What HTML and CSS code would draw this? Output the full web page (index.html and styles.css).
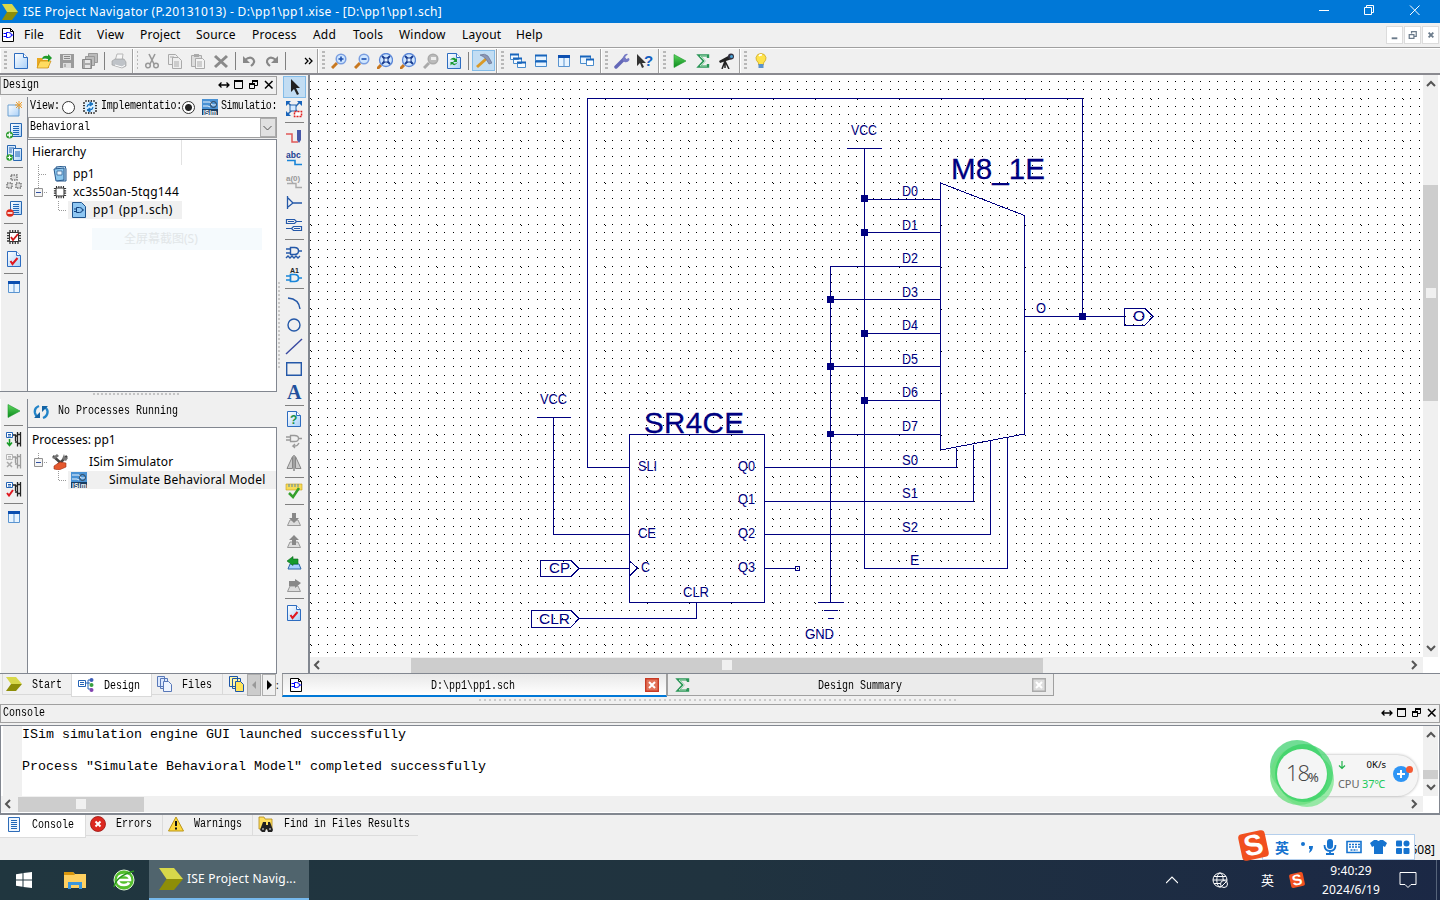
FILE: index.html
```html
<!DOCTYPE html>
<html lang="en">
<head>
<meta charset="utf-8">
<title>ISE Project Navigator</title>
<link rel="stylesheet" href="styles.css">
</head>
<body>
<svg class="defs" aria-hidden="true">
  <defs>
    <linearGradient id="gPage" x1="0" y1="0" x2="1" y2="1"><stop offset="0" stop-color="#fff"/><stop offset="1" stop-color="#a9d0f8"/></linearGradient>
    <linearGradient id="gPlay" x1="0" y1="0" x2="0" y2="1"><stop offset="0" stop-color="#5fd75f"/><stop offset="1" stop-color="#0a8a1c"/></linearGradient>
    <symbol id="xilinx" viewBox="0 0 16 16" preserveAspectRatio="none"><path d="M0 0h10l6 8H5z" fill="#d8d84a"/><path d="M5 8h11l-6 8H0z" fill="#8e8e08"/></symbol>
    <symbol id="sch" viewBox="0 0 14 16"><path d="M1.500 1.500h8l3 3v10h-11z" fill="#fff" stroke="#000"/><path d="M9.500 1.500v3h3" fill="none" stroke="#000"/><path d="M5.500 5.500h2q3 0 3 2.500t-3 2.500h-2zM2.500 6.500h3M2.500 9.500h3M10.500 8h2" fill="none" stroke="#00f"/></symbol>
    <symbol id="page" viewBox="0 0 16 16"><path d="M1.500 .5h9l4 4v11h-13z" fill="url(#gPage)" stroke="#2d6cc0"/><path d="M10.500 .5v4h4" fill="#fff" stroke="#2d6cc0"/></symbol>
    <symbol id="zoomer" viewBox="0 0 16 16"><path d="M1 15l5-5" stroke="#c87820" stroke-width="3"/><circle cx="10" cy="6" r="4.800" fill="#cfe6ff" stroke="#7a9ee0" stroke-width="1.500"/></symbol>
    <symbol id="zoomfit" viewBox="0 0 16 16"><path d="M0 16l4-4" stroke="#c87820" stroke-width="3"/><circle cx="9" cy="7" r="6.500" fill="#cfe6ff" stroke="#5a86d8" stroke-width="1.300"/><path d="M5 3l8 8M13 3l-8 8" stroke="#163a90" stroke-width="1.800"/><path d="M7 5h4v4H7z" fill="#e8f4ff" stroke="#163a90"/></symbol>
    <symbol id="play" viewBox="0 0 16 16"><path d="M2 1.500l12 6.500-12 6.500z" fill="url(#gPlay)" stroke="#1b9a2c" stroke-width=".6"/></symbol>
    <symbol id="table" viewBox="0 0 16 16"><path d="M2.500 2.500h11v11h-11z" fill="#e8f4ff" stroke="#5a94d0"/><path d="M2 2h12v3H2z" fill="#0c4fb0"/><path d="M8 5v9" stroke="#5a94d0"/></symbol>
    <symbol id="chip" viewBox="0 0 16 16"><path d="M4 1v14M6.700 1v14M9.300 1v14M12 1v14M1 4h14M1 6.700h14M1 9.300h14M1 12h14" stroke="#333" stroke-width="1.300"/><path d="M3.500 3.500h9v9h-9z" fill="#fff" stroke="#333"/></symbol>
    <symbol id="lines" viewBox="0 0 16 16"><path d="M4.500 .5h11v13h-11z" fill="url(#gPage)" stroke="#2867b0"/><path d="M7 3.500h6M7 5.500h6M7 7.500h6M7 9.500h6M7 11.500h6" stroke="#1d66b8"/></symbol>
    <symbol id="isim" viewBox="0 0 16 16"><path d="M0 0h16v16H0z" fill="#4a92d4"/><path d="M1 3h7l2 3h4M1 7h5l2 1" stroke="#e8f4ff" fill="none"/><circle cx="11.500" cy="5.500" r="3" fill="none" stroke="#345"/><path d="M0 10h16v6H0z" fill="#173d62"/><text x="1" y="15.500" class="isimtext">ISim</text></symbol>
    <symbol id="flow" viewBox="0 0 16 16"><path d="M.5 1.500h6v5h-6z" fill="#fff" stroke="#2463b5"/><path d="M2 3.500h3M2 5h3" stroke="#2463b5"/><path d="M7 4h2.500v6M11.500 3.500h3v9h-3zM9 5h2M9 11h2M14.500 1v2.500M11.500 1v2.500M14.500 12v3.500M11.500 12v3.500" fill="none" stroke="#222" stroke-width="1.300"/></symbol>
    <symbol id="pagecheck" viewBox="0 0 16 16"><use href="#page"/><path d="M4.500 10l2 3 5-6" fill="none" stroke="#e01820" stroke-width="2"/></symbol>
    <symbol id="dockdouble" viewBox="0 0 12 12"><path d="M1 6h10M3.500 3.500L1 6l2.500 2.500M8.500 3.500L11 6 8.500 8.500" fill="none" stroke="#000" stroke-width="1.300"/></symbol>
    <symbol id="dockmax" viewBox="0 0 12 12"><path d="M1.500 1.500h8v8h-8z" fill="none" stroke="#000"/><path d="M1 2h9" stroke="#000" stroke-width="2"/></symbol>
    <symbol id="dockfloat" viewBox="0 0 12 12"><path d="M4.500 4V1.500h5v5H7M1.500 5h5v4.500h-5z" fill="none" stroke="#000"/><path d="M4 2h6M1 5h6" stroke="#000" stroke-width="2"/></symbol>
    <symbol id="dockx" viewBox="0 0 12 12"><path d="M2 2l7.500 7.500M9.500 2L2 9.500" stroke="#000" stroke-width="1.500"/></symbol>
    <symbol id="aup" viewBox="0 0 12 12"><path d="M2 8l4-4 4 4" fill="none" stroke="#555" stroke-width="2"/></symbol>
    <symbol id="adown" viewBox="0 0 12 12"><path d="M2 4l4 4 4-4" fill="none" stroke="#555" stroke-width="2"/></symbol>
    <symbol id="aleft" viewBox="0 0 12 12"><path d="M8 2L4 6l4 4" fill="none" stroke="#555" stroke-width="2"/></symbol>
    <symbol id="aright" viewBox="0 0 12 12"><path d="M4 2l4 4-4 4" fill="none" stroke="#555" stroke-width="2"/></symbol>
    <symbol id="minus" viewBox="0 0 9 9"><path d="M.5 .5h8v8h-8z" fill="#f4f4f4" stroke="#919191"/><path d="M2 4.500h5" stroke="#3050a0"/></symbol>
    <symbol id="drum" viewBox="0 0 16 16"><path d="M4 9h8l2.500 5.500h-13z" fill="#ddd" stroke="#999"/></symbol>
  </defs>
</svg>

<header class="titlebar">
  <svg class="i16"><use href="#xilinx"/></svg>
  <span class="title">ISE Project Navigator (P.20131013) - D:\pp1\pp1.xise - [D:\pp1\pp1.sch]</span>
  <svg class="winbtns" viewBox="0 0 140 23"><path d="M19 10.500h10M64.500 7.500h7v7h-7zM66.500 7.500v-2h7v7h-2M110 5.500l9.500 9.500M119.500 5.500L110 15" fill="none" stroke="#fff"/></svg>
</header>

<nav class="menubar">
  <svg class="menuicon"><use href="#sch"/></svg>
  <span class="m1">File</span><span class="m2">Edit</span><span class="m3">View</span><span class="m4">Project</span><span class="m5">Source</span><span class="m6">Process</span><span class="m7">Add</span><span class="m8">Tools</span><span class="m9">Window</span><span class="m10">Layout</span><span class="m11">Help</span>
  <div class="mdibtns">
    <svg viewBox="0 0 16 17"><path d="M5 12h6" stroke="#6b7b8b" stroke-width="2"/></svg>
    <svg viewBox="0 0 16 17"><path d="M7 7V5h5v5h-2M4.500 8h5v4h-5z" fill="none" stroke="#6b7b8b" stroke-width="1.300"/></svg>
    <svg viewBox="0 0 16 17"><path d="M6 6l5 5M11 6l-5 5" stroke="#6b7b8b" stroke-width="2"/></svg>
  </div>
</nav>

<div class="toolbar">
  <div class="group ga"><i class="grip"></i>
    <svg><use href="#page"/></svg>
    <svg viewBox="0 0 16 16"><path d="M1 15V5h5l1 2h6v8z" fill="#e9a820"/><path d="M1 15l3-7h11l-3 7z" fill="#ffdc60" stroke="#c98a10" stroke-width=".7"/><path d="M6 6q1-4 6-3V1l4 4-4 4V6q-3-1-6 0" fill="#1e9a2a"/></svg>
    <svg viewBox="0 0 16 16"><path d="M1 1h14v14H1z" fill="#9b9b9b"/><path d="M4 2h8v5H4zM4 10h8v5H4z" fill="#ddd"/><path d="M5 3.500h6M5 5.500h6M6 11v3" stroke="#888"/></svg>
    <svg viewBox="0 0 16 16"><path d="M6.500 .5h9v9h-9z" fill="#bbb" stroke="#999"/><path d="M3.500 3.500h9v9h-9z" fill="#bbb" stroke="#999"/><path d="M.5 6.500h9v9h-9z" fill="#aaa" stroke="#888"/><path d="M3 7h5v3H3zM3 12h5v3H3z" fill="#e6e6e6"/></svg>
    <i class="sep"></i>
    <svg viewBox="0 0 16 16"><path d="M4 8l2-7h6l-1 7z" fill="#f6f6f6" stroke="#b8b8b8"/><path d="M1 8l3-2h9l2 3v4l-4 2-10-3z" fill="#bfc3c8" stroke="#999" stroke-width=".6"/><path d="M4 12l7 2 3-2" stroke="#fff" fill="none"/></svg>
  </div>
  <div class="group gb"><i class="grip"></i>
    <svg viewBox="0 0 16 16"><path d="M5 1l5 10M11 1L6 11" stroke="#999" stroke-width="1.600"/><circle cx="4" cy="12.500" r="2.300" fill="none" stroke="#999" stroke-width="1.500"/><circle cx="12" cy="12.500" r="2.300" fill="none" stroke="#999" stroke-width="1.500"/></svg>
    <svg viewBox="0 0 16 16"><path d="M1.500 1.500h7l2 2v8h-9z" fill="#eee" stroke="#aaa"/><path d="M5.500 4.500h6l3 3v8h-9z" fill="#eee" stroke="#aaa"/><path d="M7 9h5M7 11h5M7 13h5M3 4h4" stroke="#aaa"/></svg>
    <svg viewBox="0 0 16 16"><path d="M1.500 2.500h10v11h-10z" fill="#ddd" stroke="#aaa"/><path d="M4 1h5v3H4z" fill="#aaa"/><path d="M5.500 5.500h7l2 2v8h-9z" fill="#f3f3f3" stroke="#aaa"/><path d="M7 9h5M7 11h5M7 13h5" stroke="#aaa"/></svg>
    <svg viewBox="0 0 16 16"><path d="M2 3l12 11M14 3L2 14" stroke="#8a8a8a" stroke-width="3"/></svg>
    <i class="sep"></i>
    <svg viewBox="0 0 16 16"><path d="M4 7q5-4 8-1t-2 7" fill="none" stroke="#888" stroke-width="2.200"/><path d="M2 3v7h7z" fill="#888"/></svg>
    <svg viewBox="0 0 16 16"><path d="M12 7Q7 3 4 6t2 7" fill="none" stroke="#888" stroke-width="2.200"/><path d="M14 3v7H7z" fill="#888"/></svg>
    <i class="sep"></i>
    <svg class="more" viewBox="0 0 16 16"><path d="M4 5l3 3-3 3M8 5l3 3-3 3" fill="none" stroke="#000" stroke-width="1.300"/></svg>
  </div>
  <div class="group gc"><i class="grip"></i>
    <svg viewBox="0 0 16 16"><use href="#zoomer"/><path d="M7.500 6h5M10 3.500v5" stroke="#1b4fb0" stroke-width="1.600"/></svg>
    <svg viewBox="0 0 16 16"><use href="#zoomer"/><path d="M7.500 6h5" stroke="#1b4fb0" stroke-width="1.600"/></svg>
    <svg><use href="#zoomfit"/></svg>
    <svg><use href="#zoomfit"/></svg>
    <svg viewBox="0 0 16 16"><path d="M1 15l5-5" stroke="#aaa" stroke-width="3"/><circle cx="10" cy="6" r="4.800" fill="#bbb" stroke="#aaa" stroke-width="1.500"/><path d="M8 4h5v3H8z" fill="#eee"/></svg>
    <svg viewBox="0 0 16 16"><use href="#page"/><path d="M4 7q3-4 6-1l1-1v4H7l1.500-1.500Q6.500 6 4 7M12 9q-3 5-6 2l-1.500 1.500V9H8l-1 1q2 2 5-1" fill="#189a30"/></svg>
    <i class="sep"></i>
    <span class="pressed"><svg viewBox="0 0 16 16"><path d="M1 14l9-8" stroke="#d99a28" stroke-width="3"/><path d="M4 2q5-2 8 1l4 7-3 1-3-5Q7 3 4 2" fill="#8c96b4" stroke="#5e6888" stroke-width=".6"/></svg></span>
  </div>
  <div class="group gd"><i class="grip"></i>
    <svg viewBox="0 0 16 16"><path d="M.5 1.500h8v5h-8zM3.500 5.500h8v5h-8zM7.500 9.500h8v5h-8z" fill="#f5faff" stroke="#4a8ccc"/><path d="M0 1.500h9M3 5.500h9M7 9.500h9" stroke="#1764bc" stroke-width="2"/></svg>
    <svg viewBox="0 0 16 16"><path d="M2.500 2.500h11v5h-11zM2.500 8.500h11v5h-11z" fill="#e8f4ff" stroke="#4a8ccc"/><path d="M2 2.500h12M2 8.500h12" stroke="#1764bc" stroke-width="2"/></svg>
    <svg><use href="#table"/></svg>
    <svg viewBox="0 0 16 16"><path d="M1.500 3.500h10v7h-10z" fill="#eaf5ff" stroke="#4a8ccc"/><path d="M7.500 6.500h7v6h-7z" fill="#fff" stroke="#4a8ccc"/><path d="M1 3.500h11M7 6.500h8" stroke="#1764bc" stroke-width="2"/></svg>
  </div>
  <div class="group ge"><i class="grip"></i>
    <svg viewBox="0 0 16 16"><path d="M2 14l8-8" stroke="#6468b8" stroke-width="3.500" stroke-linecap="round"/><path d="M14 1l-3 3 1 2 3-1 .5 2q-2 3-5 2T9 4q2-4 5-3" fill="#7478c4"/></svg>
    <svg viewBox="0 0 16 16"><path d="M0 1v12l3-3 2 5 2-1-2-4h4z" fill="#333"/><text x="7" y="13" class="qmark">?</text></svg>
  </div>
  <div class="group gf"><i class="grip"></i>
    <svg><use href="#play"/></svg>
    <svg viewBox="0 0 16 16"><path d="M13 5V2.500H4L9 8l-5 5.500h9V11" fill="none" stroke="#2b9658" stroke-width="2.400"/><path d="M12 3H5l5 5-5 5h7" fill="none" stroke="#bde8c8" stroke-width=".9"/></svg>
    <svg viewBox="0 0 16 16"><path d="M1 8l11-6 2 4-12 4z" fill="#222"/><circle cx="13" cy="3.500" r="3" fill="#334"/><circle cx="13.500" cy="3.500" r="1.500" fill="#4ba5d8"/><path d="M7 8l-3 8M7 8l4 8M7 8v7" stroke="#222" stroke-width="1.500"/></svg>
  </div>
  <div class="group gg"><i class="grip"></i>
    <svg viewBox="0 0 16 16"><path d="M5.500 10Q2.500 7 3 4.500 4 .5 8 .5t5 4Q13.500 7 10.500 10v2h-5z" fill="#ffe34a" stroke="#c9a21c" stroke-width=".7"/><path d="M6 3q1-1.500 3-1" stroke="#fff" stroke-width="1.500" fill="none"/><path d="M5.500 11h5v4h-5z" fill="#5c92cc"/></svg>
  </div>
</div>

<main class="workspace">
  <aside class="dock">
    <div class="dockhead"><span class="sim">Design</span><span class="dockicons"><svg><use href="#dockdouble"/></svg><svg><use href="#dockmax"/></svg><svg><use href="#dockfloat"/></svg><svg><use href="#dockx"/></svg></span></div>
    <section class="upper">
      <div class="strip">
        <svg viewBox="0 0 16 16"><path d="M2 4h11v11H2z" fill="url(#gPage)" stroke="#6a9fd0"/><path d="M13 0v8M9 4h7M10 1l6 6M16 1l-6 6" stroke="#eda030"/></svg>
        <svg viewBox="0 0 16 16"><use href="#lines"/><circle cx="3.500" cy="12" r="3.500" fill="#2c9c2e"/><path d="M1 12h5M3.500 9.500v5" stroke="#fff" stroke-width="1.400"/></svg>
        <svg viewBox="0 0 16 16"><path d="M1.500 .5h8v10h-8z" fill="#d8ebff" stroke="#2867b0"/><path d="M3 3h5M3 5h3M3 7h3" stroke="#2867b0"/><path d="M7.500 3.500h8v12h-8z" fill="url(#gPage)" stroke="#2867b0"/><path d="M9 7h5M9 9h5M9 11h5" stroke="#1d66b8"/><circle cx="3.500" cy="12.500" r="3.200" fill="#2c9c2e"/><path d="M1.500 12.500h4M3.500 10.500v4" stroke="#fff" stroke-width="1.200"/></svg>
        <i class="hsep"></i>
        <svg viewBox="0 0 16 16"><path d="M5 2h6v5H5zM1 10h5v5H1zM10 10h5v5h-5z" fill="#ddd" stroke="#777" stroke-width="1.500" stroke-dasharray="1.500 1"/></svg>
        <i class="hsep"></i>
        <svg viewBox="0 0 16 16"><use href="#lines"/><circle cx="4" cy="12" r="3.800" fill="#dc2a1c"/><path d="M1.500 12h5" stroke="#fff" stroke-width="1.600"/></svg>
        <i class="hsep"></i>
        <svg viewBox="0 0 16 16"><use href="#chip"/><path d="M5 8l2 3 5-6" stroke="#d01818" stroke-width="1.800" fill="none"/></svg>
        <svg><use href="#pagecheck"/></svg>
        <i class="hsep"></i>
        <svg><use href="#table"/></svg>
      </div>
      <div class="panel">
        <div class="viewrow"><span class="sim">View:</span><i class="radio r1"></i><svg class="i16" viewBox="0 0 16 16"><use href="#chip"/><path d="M3 3h10v10H3z" fill="#d8efff"/><path d="M5 8q0-3 3-3M11 8q0 3-3 3M8 3v4l3-2zM8 9v4l-3-2z" stroke="#1972c0" fill="#1972c0"/></svg><span class="sim impl">Implementatio:</span><i class="radio on"></i><svg class="i16 simic"><use href="#isim"/></svg><span class="sim simu">Simulatio:</span></div>
        <div class="combo"><span class="sim">Behavioral</span><span class="combobtn"><svg viewBox="0 0 12 12"><path d="M2 4l4 4 4-4" fill="none" stroke="#555"/></svg></span></div>
        <div class="tree">
          <div class="treehead"><span>Hierarchy</span></div>
          <div class="row"><svg class="br" viewBox="0 0 30 18"><path d="M10.500 0v18M11 9.500h8" class="dots"/></svg><svg class="i16" viewBox="0 0 16 16"><path d="M4 1l9-1 1 3v12H5z" fill="#b8dcf4" stroke="#28588c"/><path d="M2 3l10-1v12l-8 1z" fill="#8cc8ee" stroke="#28588c"/><path d="M5 5h5v4H5z" fill="#e8f6ff" stroke="#28588c" stroke-width=".7"/></svg><span>pp1</span></div>
          <div class="row"><svg class="br" viewBox="0 0 30 18"><path d="M10.500 0v5M16 9.500h4" class="dots"/><use href="#minus" x="6" y="5" width="9" height="9"/></svg><svg class="i14"><use href="#chip"/></svg><span class="dev">xc3s50an-5tqg144</span></div>
          <div class="row"><svg class="br" viewBox="0 0 30 18"></svg><svg class="br2" viewBox="0 0 12 18"><path d="M1.500 0v9.500h8" class="dots"/></svg><span class="selected s1"><svg class="i16" viewBox="0 0 16 16"><path d="M1.500 .5h9l4 4v11h-13z" fill="#8fc7f2" stroke="#20548c"/><path d="M5.500 5.500h3q3 0 3 2.500t-3 2.500h-3zM3 7h2.500M3 9.500h2.500M11.500 8H13" fill="none" stroke="#12407c"/></svg><span>pp1 (pp1.sch)</span></span></div>
          <div class="ghost">全屏幕截图(S)</div>
        </div>
      </div>
    </section>
    <div class="vsplit"><i></i></div>
    <section class="lower">
      <div class="strip strip2">
        <svg><use href="#play"/></svg>
        <i class="hsep"></i>
        <svg viewBox="0 0 16 16"><use href="#flow"/><path d="M3.500 8v6M1 11.500l2.500 3 2.500-3" stroke="#159a25" stroke-width="1.500" fill="none"/></svg>
        <svg class="dim" viewBox="0 0 16 16"><use href="#flow"/><path d="M1 9l5 5M6 9l-5 5" stroke="#444" stroke-width="1.500"/></svg>
        <i class="hsep"></i>
        <svg viewBox="0 0 16 16"><use href="#flow"/><path d="M1 12l2 2.500L7 9" stroke="#e01820" stroke-width="2" fill="none"/></svg>
        <i class="hsep"></i>
        <svg><use href="#table"/></svg>
      </div>
      <div class="panel">
        <div class="running"><svg class="i16" viewBox="0 0 16 16"><path d="M6 2Q1 4 2 9q.5 2 2 4M10 14q5-2 4.500-7Q14 5 12 3" fill="none" stroke="#2384c8" stroke-width="2.400"/><path d="M1 14h6V8zM15 2H9v6z" fill="#1463a4"/></svg><span class="sim">No Processes Running</span></div>
        <div class="tree proc">
          <div class="treehead"><span>Processes: pp1</span></div>
          <div class="row"><svg class="br" viewBox="0 0 30 18"><path d="M10.500 0v5M16 9.500h4" class="dots"/><use href="#minus" x="6" y="5" width="9" height="9"/></svg><svg class="i16" viewBox="0 0 16 16"><path d="M1 2l10 9M15 2L6 11" stroke="#444" stroke-width="2.500"/><path d="M0 4l5-4 2 2-4 3zM12 0l1 3 3 1-2 3-4-2z" fill="#777"/><path d="M2 12l6-4 6 1v4l-7 3-5-1z" fill="#e4582e" stroke="#9c2c12" stroke-width=".6"/></svg><span class="ptext">ISim Simulator</span></div>
          <div class="row"><svg class="br" viewBox="0 0 30 18"></svg><svg class="br2" viewBox="0 0 12 18"><path d="M1.500 0v9.500h8" class="dots"/></svg><span class="selected s2"><svg class="i16"><use href="#isim"/></svg><span class="ptext2">Simulate Behavioral Model</span></span></div>
        </div>
      </div>
    </section>
    <div class="docktabs">
      <span class="dt t1"><svg class="i16"><use href="#xilinx" height="14" y="1"/></svg><span class="sim">Start</span></span>
      <span class="dt t2"><svg class="i16" viewBox="0 0 16 16"><path d="M.5 3.500h7v6h-7z" fill="#fff" stroke="#2463b5"/><path d="M2 5.500h4M2 7.500h4M8 6h4M10 3v9h3M10 3h3" stroke="#2463b5" fill="none"/><circle cx="13.500" cy="3" r="2" fill="#3d5db8"/><circle cx="13.500" cy="8" r="2" fill="#38a040"/><circle cx="13.500" cy="13" r="2" fill="#8244b0"/></svg><span class="sim">Design</span></span>
      <span class="dt t3"><svg class="i16" viewBox="0 0 16 16"><path d="M1.500 .5h7v10h-7zM4.500 2.500h7v10h-7z" fill="#dce9ff" stroke="#5878b8"/><path d="M7.500 5.500h5l3 3v7h-8z" fill="#eef4ff" stroke="#5878b8"/></svg><span class="sim">Files</span></span>
      <span class="dt t4"><svg class="i16" viewBox="0 0 16 16"><path d="M1.500 .5h8v10h-8zM4.500 2.500h8v10h-8z" fill="#fff6a8" stroke="#1d56a8"/><path d="M7.500 5.500h5l3 3v7h-8z" fill="#ffe45a" stroke="#1d56a8"/></svg></span>
      <span class="scr off"><svg viewBox="0 0 12 12"><path d="M8 2v8L4 6z" fill="#999"/></svg></span><span class="scr"><svg viewBox="0 0 12 12"><path d="M4 1v10l5-5z" fill="#000"/></svg></span><span class="rest">:</span>
    </div>
  </aside>
  <div class="hsplit"></div>
  <div class="editor">
    <div class="edrow">
      <div class="tools">
        <span class="pressed"><svg viewBox="0 0 16 16"><path d="M5 0v13l3-3 3 6 2-1-3-6h4z" fill="#222"/></svg></span>
        <svg viewBox="0 0 16 16"><path d="M1 1l13 12M14 1L1 14" stroke="#2464ac" stroke-width="1.500"/><path d="M0 0h5L0 5zM16 0v5l-5-5zM0 15v-5l5 5z" fill="#1764bc"/><path d="M4 4h6v6H4z" fill="#d6ebff" stroke="#2464ac"/><path d="M8.500 10.500h7v5h-7z" fill="#fff" stroke="#e02020" stroke-width="1.500" stroke-dasharray="2 1"/></svg>
        <i class="hsep"></i>
        <svg viewBox="0 0 16 16"><path d="M0 5h6v8h6" fill="none" stroke="#e05858" stroke-width="1.500"/><path d="M11 1h4v10l-2 3-2-3z" fill="#4858a8"/></svg>
        <svg viewBox="0 0 16 16"><text x="0" y="7" class="ictext">abc</text><path d="M1 9.500h8v4h7" fill="none" stroke="#1985d8" stroke-width="1.600"/></svg>
        <svg viewBox="0 0 16 16"><text x="0" y="8" class="ictext g">a(0)</text><path d="M1 10.500h9v4h6" fill="none" stroke="#aaa" stroke-width="1.400"/></svg>
        <svg viewBox="0 0 16 16"><path d="M1.500 1v13M2 3l5 5-5 4M7 8h9" fill="none" stroke="#2458a8" stroke-width="1.300"/></svg>
        <svg viewBox="0 0 16 16"><path d="M.5 2.500h8l2 2-2 2h-8zM15.500 9.500h-8l-2 2 2 2h8zM10 4.500h6M0 11.500h6M2 4.500h6M8 11.500h6" fill="none" stroke="#2458a8" stroke-width="1.200"/></svg>
        <i class="hsep"></i>
        <svg viewBox="0 0 16 16"><path d="M4.500 2.500h4q4 0 4 3.500t-4 3.500h-4zM0 4h4M0 8h4M12 6h4M0 13l2-2 2 2 2-2 2 2 2-2 2 2 2-2" fill="none" stroke="#2458a8" stroke-width="1.400"/></svg>
        <svg viewBox="0 0 16 16"><text x="4" y="6" class="ictext k">A1</text><path d="M4.500 7.500h4q4 0 4 3.500t-4 3.500h-4zM0 9h4M0 13h4M12 11h4" fill="none" stroke="#1985d8" stroke-width="1.700"/></svg>
        <i class="hsep"></i>
        <svg viewBox="0 0 16 16"><path d="M2 3q11 1 12 11" fill="none" stroke="#2458a8" stroke-width="1.400"/></svg>
        <svg viewBox="0 0 16 16"><circle cx="8" cy="8" r="6" fill="none" stroke="#2458a8" stroke-width="1.400"/></svg>
        <svg viewBox="0 0 16 16"><path d="M0 15L16 0" stroke="#3848a0" stroke-width="1.400"/></svg>
        <svg viewBox="0 0 16 16"><path d="M.7 1.700h14.600v12.600H.7z" fill="none" stroke="#2458a8" stroke-width="1.400"/></svg>
        <svg viewBox="0 0 16 16"><text x="1" y="14.500" class="biga">A</text></svg>
        <i class="hsep"></i>
        <svg viewBox="0 0 16 16"><use href="#page"/><text x="4" y="13" class="helpq">?</text></svg>
        <svg viewBox="0 0 16 16"><path d="M4.500 2.500h4q4 0 4 3t-4 3h-4zM0 4h4M0 7h4M12 5.500h4M13 10q-2 4-6 3l2-2M7 13l2 2" fill="none" stroke="#999" stroke-width="1.300"/></svg>
        <svg viewBox="0 0 16 16"><path d="M6.500 1.500v12h-5.500zM9.500 1.500v12H15z" fill="#ccc" stroke="#888"/><path d="M8 0v16" stroke="#888" stroke-width="1.500"/></svg>
        <i class="hsep"></i>
        <svg viewBox="0 0 16 16"><path d="M0 1h16v6H0z" fill="#f7dc58" stroke="#c8a020" stroke-width=".6"/><path d="M3 1v3M6 1v3M9 1v3M12 1v3" stroke="#58a"/><path d="M3 10l4 4 6-9" fill="none" stroke="#35a02c" stroke-width="2.500"/></svg>
        <i class="hsep"></i>
        <svg viewBox="0 0 16 16"><use href="#drum"/><path d="M6 2h4v5h3l-5 5-5-5h3z" fill="#888"/></svg>
        <svg viewBox="0 0 16 16"><use href="#drum"/><path d="M6 12h4V7h3L8 2 3 7h3z" fill="#888"/></svg>
        <svg viewBox="0 0 16 16"><path d="M4 9h9l2 5H2z" fill="#a9d0ff" stroke="#2c66a8"/><path d="M12 4H7V1.500L1 6l6 4.500V9h5z" fill="#159a2c" stroke="#076a18" stroke-width=".6"/></svg>
        <svg viewBox="0 0 16 16"><use href="#drum"/><path d="M3 4h6V2l6 4-6 5V9H3z" fill="#888"/></svg>
        <i class="hsep"></i>
        <svg><use href="#pagecheck"/></svg>
      </div>
      <div class="viewport">
        <svg class="canvas" viewBox="310 75 1113 582">
          <defs>
            <pattern id="grid" x="16" y="14" width="42" height="42" patternUnits="userSpaceOnUse">
              <path class="dot" d="M0 0h1v1h-1zM8 0h1v1h-1zM17 0h1v1h-1zM25 0h1v1h-1zM34 0h1v1h-1zM0 8h1v1h-1zM8 8h1v1h-1zM17 8h1v1h-1zM25 8h1v1h-1zM34 8h1v1h-1zM0 16h1v1h-1zM8 16h1v1h-1zM17 16h1v1h-1zM25 16h1v1h-1zM34 16h1v1h-1zM0 25h1v1h-1zM8 25h1v1h-1zM17 25h1v1h-1zM25 25h1v1h-1zM34 25h1v1h-1zM0 33h1v1h-1zM8 33h1v1h-1zM17 33h1v1h-1zM25 33h1v1h-1zM34 33h1v1h-1zM1 1h1v1h-1z"/>
            </pattern>
          </defs>
          <rect x="310" y="75" width="1113" height="582" fill="url(#grid)"/>
          <g class="wire">
            <path d="M629 467.500H587.500V98.500H1082.500V316M1024 316.500H1124M847 148.500H882M864.500 148V568.500H1007.500V437M864 199.500H940M864 232.500H940M940 266.500H830.500V602M830 299.500H940M864 333.500H940M830 366.500H940M864 400.500H940M830 434.500H940M764 467.500H956.500V448M764 501.500H973.500V445M764 534.500H990.500V441M764 568.500H795M818 602.500H844M824 610.500H838M828 618.500H834M537 417.500H571M553.500 417V534.500H629M579 568.500H629M579 618.500H696.500V602"/>
            <path d="M629.500 434.500H764.500V602.500H629.500zM940.500 183V450L1024.500 434V215.500zM629.500 561l8 7-8 8M540.500 560.500H571l8 8-8 8H540.500zM531.500 610.500H571l8 8-8 8.500H531.500zM1124.500 308.500H1145l8 8-8 8.500H1124.500zM795.500 566.500h4v4h-4z"/>
          </g>
          <path class="node" d="M861 195h7v7h-7zM861 229h7v7h-7zM861 330h7v7h-7zM861 397h7v7h-7zM827 296h7v7h-7zM827 363h7v7h-7zM827 431h7v6h-7zM1079 313h7v7h-7z"/>
          <g class="lbl">
            <text x="851" y="135" textLength="26" lengthAdjust="spacingAndGlyphs">VCC</text><text x="540" y="404" textLength="27" lengthAdjust="spacingAndGlyphs">VCC</text>
            <text x="902" y="196" textLength="16" lengthAdjust="spacingAndGlyphs">D0</text><text x="902" y="230" textLength="16" lengthAdjust="spacingAndGlyphs">D1</text><text x="902" y="263" textLength="16" lengthAdjust="spacingAndGlyphs">D2</text><text x="902" y="297" textLength="16" lengthAdjust="spacingAndGlyphs">D3</text><text x="902" y="330" textLength="16" lengthAdjust="spacingAndGlyphs">D4</text><text x="902" y="364" textLength="16" lengthAdjust="spacingAndGlyphs">D5</text><text x="902" y="397" textLength="16" lengthAdjust="spacingAndGlyphs">D6</text><text x="902" y="431" textLength="16" lengthAdjust="spacingAndGlyphs">D7</text>
            <text x="902" y="465" textLength="16" lengthAdjust="spacingAndGlyphs">S0</text><text x="902" y="498" textLength="16" lengthAdjust="spacingAndGlyphs">S1</text><text x="902" y="532" textLength="16" lengthAdjust="spacingAndGlyphs">S2</text><text x="910" y="565">E</text>
            <text x="638" y="471" textLength="19" lengthAdjust="spacingAndGlyphs">SLI</text><text x="638" y="538" textLength="18" lengthAdjust="spacingAndGlyphs">CE</text><text x="641" y="572" textLength="9" lengthAdjust="spacingAndGlyphs">C</text><text x="683" y="597" textLength="26" lengthAdjust="spacingAndGlyphs">CLR</text>
            <text x="738" y="471" textLength="17" lengthAdjust="spacingAndGlyphs">Q0</text><text x="738" y="504" textLength="17" lengthAdjust="spacingAndGlyphs">Q1</text><text x="738" y="538" textLength="17" lengthAdjust="spacingAndGlyphs">Q2</text><text x="738" y="572" textLength="17" lengthAdjust="spacingAndGlyphs">Q3</text>
            <text x="1036" y="313" textLength="10" lengthAdjust="spacingAndGlyphs">O</text><text x="805" y="639" textLength="29" lengthAdjust="spacingAndGlyphs">GND</text>
          </g>
          <g class="port"><text x="549" y="573" textLength="21" lengthAdjust="spacingAndGlyphs">CP</text><text x="539" y="624" textLength="31" lengthAdjust="spacingAndGlyphs">CLR</text><text x="1133" y="321">O</text></g>
          <g class="big"><text x="644" y="433" textLength="100">SR4CE</text><text x="951" y="179" textLength="94">M8_1E</text></g>
        </svg>
        <div class="vscroll"><svg><use href="#aup"/></svg><i class="thumb v1"><b></b></i><svg class="last"><use href="#adown"/></svg></div>
        <div class="hscroll"><svg><use href="#aleft"/></svg><i class="thumb h1"><b></b></i><svg class="last"><use href="#aright"/></svg></div>
      </div>
    </div>
    <div class="doctabs">
      <div class="doc active"><svg class="schic"><use href="#sch"/></svg><span class="sim">D:\pp1\pp1.sch</span><svg class="close" viewBox="0 0 14 14"><path d="M.7 .7h12.600v12.600H.7z" fill="#e2735a" stroke="#c83a24" stroke-width="1.400"/><path d="M4 4l6 6M10 4l-6 6" stroke="#fff" stroke-width="2"/></svg></div>
      <div class="doc"><svg class="sig" viewBox="0 0 16 16"><path d="M14 5V2.500H4L9 8l-5 5.500h10V11" fill="none" stroke="#2b9658" stroke-width="2.400"/><path d="M12 3H5l5 5-5 5h7" fill="none" stroke="#bde8c8" stroke-width=".9"/></svg><span class="sim">Design Summary</span><svg class="close" viewBox="0 0 14 14"><path d="M.7 .7h12.600v12.600H.7z" fill="#ddd" stroke="#aaa" stroke-width="1.400"/><path d="M4 4l6 6M10 4l-6 6" stroke="#fff" stroke-width="2"/></svg></div>
    </div>
  </div>
</main>

<div class="csplit"><i></i></div>
<section class="console">
  <div class="dockhead"><span class="sim">Console</span><span class="dockicons"><svg><use href="#dockdouble"/></svg><svg><use href="#dockmax"/></svg><svg><use href="#dockfloat"/></svg><svg><use href="#dockx"/></svg></span></div>
  <div class="cbox">
    <div class="ctext"><pre>ISim simulation engine GUI launched successfully

Process "Simulate Behavioral Model" completed successfully</pre></div>
    <div class="vscroll cv"><svg><use href="#aup"/></svg><i class="thumb v2"></i><svg><use href="#adown"/></svg></div>
    <div class="hscroll ch"><svg><use href="#aleft"/></svg><i class="thumb h2"><b></b></i><svg class="last"><use href="#aright"/></svg></div>
  </div>
  <div class="ctabs">
    <span class="ct c1"><svg class="i16" viewBox="0 0 16 16"><path d="M2.500 .5h11v14h-11z" fill="#eef6ff" stroke="#2e6cb8"/><path d="M5 3.500h6M5 5.500h6M5 7.500h6M5 9.500h6M5 11.500h6" stroke="#1d66b8"/></svg><span class="sim">Console</span></span>
    <span class="ct c2"><svg class="i16" viewBox="0 0 16 16"><circle cx="8" cy="8" r="7.500" fill="#dc2820" stroke="#9a1410" stroke-width=".8"/><path d="M5.500 5.500l5 5M10.500 5.500l-5 5" stroke="#fff" stroke-width="2"/></svg><span class="sim">Errors</span></span>
    <span class="ct c3"><svg class="i16" viewBox="0 0 16 16"><path d="M8 1l7.500 14H.5z" fill="#ffd93c" stroke="#b89418"/><path d="M8 5v5M8 11.500v2" stroke="#111" stroke-width="2"/></svg><span class="sim">Warnings</span></span>
    <span class="ct c4"><svg class="i16" viewBox="0 0 16 16"><path d="M1 1h5l1 2h7v10H1z" fill="#ffdf5e" stroke="#b08818" stroke-width=".8"/><path d="M5 6l-3 8 2 2h3l1-3h1l1 3h4l1-2-3-8h-2v3H8V6z" fill="#222"/><circle cx="5" cy="13" r="1" fill="#aaa"/><circle cx="12" cy="13" r="1" fill="#aaa"/></svg><span class="sim">Find in Files Results</span></span>
  </div>
  <div class="status">.508]</div>
</section>

<div class="monitor">
  <div class="pill">
    <span class="net"><svg viewBox="0 0 10 10"><path d="M5 1v7M2 5.500l3 3 3-3" fill="none" stroke="#20b24a" stroke-width="1.200"/></svg><span>0K/s</span></span>
    <span class="cpu">CPU <em>37℃</em></span>
    <svg class="plus" viewBox="0 0 22 22"><circle cx="9" cy="12" r="8" fill="#2e95f5"/><path d="M5 12h8M9 8v8" stroke="#fff" stroke-width="2"/><circle cx="17.500" cy="7.500" r="3.500" fill="#f45a34"/></svg>
  </div>
  <svg class="ball" viewBox="0 0 66 70"><circle cx="28" cy="29" r="27" fill="#35ce68" opacity=".7"/><circle cx="38" cy="42" r="27" fill="#7ae58e" opacity=".75"/><circle cx="30" cy="38" r="29" fill="#6bde80" opacity=".8"/><circle cx="35" cy="35" r="29" fill="#36d165" opacity=".7"/><circle cx="33" cy="36" r="25" fill="#f4f5f5"/><text x="17" y="43" class="pct">18</text><text x="39" y="44" class="pcs">%</text></svg>
</div>

<div class="ime">
  <svg viewBox="0 0 160 26"><g fill="#1673cf" stroke="none">
    <circle cx="41" cy="10" r="2"/><path d="M47 12h4q0 5-4 7l1-4h-1z"/>
    <rect x="65" y="5" width="6" height="10" rx="3"/><path d="M62.500 11q0 6 5.500 6t5.500-6M68 17v3M64 20h8" fill="none" stroke="#1673cf" stroke-width="1.800"/>
    <path d="M85 7.500h14v11H85z" fill="none" stroke="#1673cf" stroke-width="1.600"/><path d="M87 10.500h11M87 13h11M88.500 16h7" stroke="#1673cf" stroke-width="1.500" stroke-dasharray="2 1"/>
    <path d="M112 6l-4 3 2 4 2-1v8h9v-8l2 1 2-4-4-3h-3q-1.500 2-3 0z"/>
    <rect x="134" y="6.500" width="6" height="6" rx="1"/><rect x="141.500" y="6.500" width="6" height="6" rx="3"/><rect x="134" y="14" width="6" height="6" rx="1"/><rect x="141.500" y="14" width="6" height="6" rx="1"/></g></svg>
  <span class="imeying">英</span><span class="sogou">S</span>
</div>

<footer class="taskbar">
  <svg class="start" viewBox="0 0 16 16"><path d="M0 2.200l6.500-1v6.300H0zM7.500 1L16 0v7.500H7.500zM0 8.500h6.500v6.300L0 13.800zM7.500 8.500H16V16l-8.500-1z" fill="#fff"/></svg>
  <svg class="folder" viewBox="0 0 22 20"><path d="M0 2h9l2 2h11v14H0z" fill="#ffd060"/><path d="M0 2h9l2 3H0z" fill="#d9960c"/><path d="M4 12h14v7h-3v-4H7v4H4z" fill="#3a96dd"/></svg>
  <svg class="browser" viewBox="0 0 22 22"><circle cx="11" cy="11" r="10" fill="#54bf2c" stroke="#dff5d6"/><path d="M5 11h12q0-5-6-5t-6 5 6 5q4 0 5-2.500" fill="none" stroke="#fff" stroke-width="2.600"/><path d="M1 18Q3 7 21 2" stroke="#2b981e" stroke-width="1.500" fill="none"/></svg>
  <div class="task"><svg><use href="#xilinx"/></svg><span>ISE Project Navig...</span></div>
  <div class="tray">
    <svg class="chev" viewBox="0 0 12 12"><path d="M0 9l6-6 6 6" fill="none" stroke="#fff" stroke-width="1.200"/></svg>
    <svg class="globe" viewBox="0 0 16 16"><circle cx="8" cy="8" r="7" fill="none" stroke="#fff"/><ellipse cx="8" cy="8" rx="3.200" ry="7" fill="none" stroke="#fff"/><path d="M1 8h14M2 4.500h12M2 11.500h6" stroke="#fff"/><circle cx="12" cy="12" r="3.500" fill="#1d2b43" stroke="#fff"/><path d="M9.500 14.500l5-5" stroke="#fff"/></svg>
    <span class="ying">英</span>
    <span class="sogou small">S</span>
    <div class="clock"><span>9:40:29</span><span>2024/6/19</span></div>
    <svg class="note" viewBox="0 0 18 18"><path d="M1 1.500h16v12h-5l-3 3-3-3H1z" fill="none" stroke="#fff"/></svg>
    <i class="peek"></i>
  </div>
</footer>
</body>
</html>
```
FILE: styles.css
```css
* { box-sizing: border-box; }
body { margin: 0; width: 1440px; height: 900px; overflow: hidden; background: #f0f0f0; color: #000; font: 12px/16px "Noto Sans", "Noto Sans CJK SC", sans-serif; position: relative; display: flex; flex-direction: column; }
svg { display: block; flex: none; }
.defs { position: absolute; width: 0; height: 0; }
.i16 { width: 16px; height: 16px; }
.i14 { width: 14px; height: 14px; margin: 0 1px; }
.sim { display: inline-block; font: 10px/14px "Liberation Mono", monospace; transform: scaleY(1.2); white-space: pre; }
.isimtext { font: bold 6.500px "Liberation Sans", sans-serif; fill: #fff; }
.ictext { font: bold 8.500px "Liberation Sans", sans-serif; fill: #203c90; }
.ictext.g { fill: #999; font-size: 8px; }
.ictext.k { font-size: 7px; fill: #222; }
.biga { font: bold 20px "Liberation Serif", serif; fill: #22509c; }
.qmark { font: bold 15px "Liberation Sans", sans-serif; fill: #1460c0; }
.helpq { font: bold 12px "Liberation Sans", sans-serif; fill: #15904a; }
.sep { width: 6px; height: 18px; border-left: 1px solid #808080; }
.hsep { height: 5.400px; width: 19px; display: flex; align-items: center; flex: none; }
.hsep::before { content: ""; height: 1px; width: 19px; background: #808080; }

.titlebar { height: 23px; background: #0078d7; color: #fff; display: flex; align-items: center; padding-left: 2px; flex: none; }
.title { margin-left: 5px; flex: 1; letter-spacing: .32px; white-space: pre; }
.winbtns { width: 140px; height: 23px; }

.menubar { height: 25px; display: flex; align-items: center; flex: none; border-bottom: 1px solid #a0a0a0; letter-spacing: .2px; }
.menuicon { width: 14px; height: 16px; margin: 0 8px 0 1px; }
.menubar > span { white-space: nowrap; flex: none; }
.m1 { width: 36px; padding-left: 1px; } .m2 { width: 38px; } .m3 { width: 43px; } .m4 { width: 56px; } .m5 { width: 56px; } .m6 { width: 61px; } .m7 { width: 40px; } .m8 { width: 46px; } .m9 { width: 63px; } .m10 { width: 54px; } .m11 { width: 40px; }
.mdibtns { margin-left: auto; display: flex; gap: 1px; padding-right: 1px; }
.mdibtns svg { width: 17px; height: 18px; background: #fff; border: 1px solid #dcdcdc; }

.toolbar { height: 27px; display: flex; flex: none; border-top: 1px solid #fff; border-bottom: 2px solid #8a8a90; }
.group { display: flex; align-items: center; border-right: 1px solid #a0a0a0; border-left: 1px solid #fff; padding-bottom: 1px; }
.group > svg { width: 16px; height: 16px; margin: 0 3.500px; }
.grip { width: 3px; height: 20px; margin: 0 2.500px 0 3px; background: repeating-linear-gradient(#b8b8b8 0 2px, transparent 2px 4px); }
.group > .sep { margin: 0 0 0 2px; width: 4px; }
.ga { width: 133px; } .gb { width: 185px; } .gc { width: 179px; } .gd { width: 104px; } .ge { width: 58px; } .gf { width: 81px; } .gg { border-right: 0; }
.group > .more { margin-left: 13.500px; margin-right: 0; }
.pressed { width: 23px; height: 21px; background: #c2ddf3; border: 1px solid #84bce8; display: flex; align-items: center; justify-content: center; flex: none; }
.group .pressed { margin-left: .5px; }
.pressed svg { width: 16px; height: 16px; }

.workspace { height: 623px; display: flex; flex: none; }
.dock { width: 277px; display: flex; flex-direction: column; flex: none; }
.dockhead { height: 19px; border: 1px solid #a0a0a0; display: flex; align-items: center; justify-content: space-between; padding: 0 0 0 2px; flex: none; margin-top: 1px; }
.dockicons { display: flex; gap: 3px; padding-right: 1px; }
.dockicons svg { width: 12px; height: 12px; margin-top: -1px; }
.upper { display: flex; height: 295px; margin-top: 2px; border-bottom: 1px solid #828790; }
.strip { width: 27px; display: flex; flex-direction: column; align-items: center; padding: 1px 1px 0 0; flex: none; border-left: 1px solid #fff; }
.strip > svg { width: 16px; height: 16px; margin: 3px 0; }
.strip .hsep { height: 6px; }
.dim { opacity: .4; filter: grayscale(1); }
.panel { flex: 1; display: flex; flex-direction: column; border-left: 1px solid #828790; min-width: 0; }
.viewrow { height: 20px; display: flex; align-items: center; padding-left: 2px; }
.radio { width: 13px; height: 13px; border: 1px solid #333; border-radius: 50%; background: #fff; flex: none; margin-left: 2px; }
.radio.on { background: radial-gradient(circle, #222 0 3px, #fff 4px); margin-left: 0; }
.r1 + .i16 { margin-left: 7px; }
.impl { margin-left: 3px; width: 81px; letter-spacing: -.22px; flex: none; }
.viewrow .radio.on { margin-left: 0; }
.simic { margin-left: 7px; }
.simu { margin-left: 3px; letter-spacing: -.4px; }
.combo { height: 21px; background: #fff; border: 1px solid #a0a0a0; display: flex; align-items: center; justify-content: space-between; padding-left: 1px; }
.combobtn { width: 16px; height: 19px; background: #e1e1e1; border: 1px solid #adadad; display: flex; align-items: center; }
.combobtn svg { width: 13px; height: 12px; }
.tree { flex: 1; background: #fff; border: 1px solid #828790; border-width: 1px 1px 0 0; margin-top: 1px; }
.treehead { height: 25px; width: 154px; border-right: 1px solid #e2e2e2; padding: 4px 0 0 4px; }
.row { height: 18px; display: flex; align-items: center; white-space: nowrap; }
.row > span { margin-left: 5px; }
.row .br { width: 30px; height: 18px; margin-right: -6px; overflow: visible; }
.row .br2 { width: 12px; height: 18px; margin-left: 5px; }
.row .dev { margin-left: 5px; letter-spacing: .2px; }
.dots { fill: none; stroke: #9a9a9a; stroke-dasharray: 1 1; }
.row .selected { background: #f0f0f0; height: 18px; display: flex; align-items: center; margin-left: -1px; padding-left: 3px; }
.s1 { width: 114px; letter-spacing: .3px; } .s2 { flex: 1; letter-spacing: .24px; }
.selected > span { margin-left: 6px; }
.row .ptext { margin-left: 21px; letter-spacing: .1px; } .selected > .ptext2 { margin-left: 22px; }
.ghost { margin: 9px 0 0 64px; width: 170px; height: 22px; line-height: 22px; padding-left: 32px; background: #f5fafd; color: #e2e6e8; }
.vsplit { height: 7px; display: flex; justify-content: center; align-items: center; }
.vsplit i { width: 88px; height: 2px; margin: -3px 3px 0 0; background: repeating-linear-gradient(90deg, #c4c4c4 0 2px, transparent 2px 4px); }
.lower { display: flex; height: 275px; border-bottom: 1px solid #828790; }
.running { height: 27px; display: flex; align-items: center; padding: 0 0 2px 5px; gap: 9px; }
.proc .treehead { height: 25px; border: 0; }
.docktabs { height: 24px; display: flex; align-items: flex-start; padding-left: 2px; }
.dt { height: 21px; display: flex; align-items: center; border: 1px solid #d9d9d9; border-top: 0; flex: none; }
.dt .sim { margin-top: 3px; }
.t1 { width: 69px; padding-left: 3px; gap: 10px; border-right: 0; } .t2 { width: 81px; height: 23px; background: #fff; padding-left: 6px; gap: 10px; } .t3 { width: 71px; padding-left: 4px; gap: 10px; border-left: 0; } .t4 { width: 24px; padding-left: 5px; border-left: 0; border-right: 0; }
.scr { width: 14px; height: 22px; border: 1px solid #adadad; background: #f0f0f0; display: flex; align-items: center; justify-content: center; flex: none; margin-right: 1px; } .scr.off { background: #ccc; }
.scr svg { width: 12px; height: 12px; }
.rest { font-size: 10px; line-height: 22px; margin-left: -1px; }
.hsplit { width: 5px; flex: none; background: repeating-linear-gradient(#c8c8c8 0 2px, transparent 2px 4px) 1px 207px / 2px 88px no-repeat; }

.editor { flex: 1; display: flex; flex-direction: column; min-width: 0; }
.edrow { display: flex; height: 599px; border-bottom: 1px solid #828790; }
.tools { width: 26px; display: flex; flex-direction: column; align-items: center; flex: none; padding: 1px 2px 0 0; }
.tools > svg { width: 16px; height: 16px; margin: 3.100px 0; overflow: visible; }
.tools .pressed { width: 23px; height: 22px; }
.viewport { flex: 1; display: grid; grid-template: 582px 16px / 1113px 17px; background: #fff; border-left: 2px solid #828790; }
.canvas { width: 1113px; height: 582px; }
.dot { fill: #000; shape-rendering: crispEdges; }
.wire { fill: none; stroke: #000080; stroke-width: 1; shape-rendering: crispEdges; }
.node { fill: #000080; shape-rendering: crispEdges; }
.lbl, .port, .big { fill: #000080; font-family: "Liberation Sans", Arial, sans-serif; }
.lbl { font-size: 14px; } .port { font-size: 15.500px; } .big { font-size: 29.500px; stroke: #000080; stroke-width: .3px; }
.vscroll, .hscroll { background: #f0f0f0; display: flex; align-items: center; }
.vscroll { flex-direction: column; width: 15px; padding: 3px 0; }
.vscroll svg, .hscroll svg { width: 12px; height: 12px; }
.hscroll { padding: 0 3px 0 1px; }
.thumb { background: #cdcdcd; display: flex; align-items: center; justify-content: center; flex: none; }
.thumb b { width: 10px; height: 10px; background: #f0f0f0; }
.v1 { width: 15px; height: 216px; margin-top: 95px; }
.vscroll .last { margin-top: auto; } .hscroll .last { margin-left: auto; }
.h1 { height: 15px; width: 632px; margin-left: 88px; }
.doctabs { display: flex; height: 24px; }
.doc { width: 387px; height: 22px; border: 1px solid #a0a0a0; border-top-width: 0; background: #ececec; display: flex; align-items: center; justify-content: space-between; padding: 1px 7px 0 6px; }
.doc .sim { margin-top: 3px; margin-left: -2px; }
.doc.active { width: 385px; height: 23px; background: linear-gradient(#e8e8e8, #fff); border-bottom: 2px solid #0078d7; }
.schic { width: 14px; height: 16px; } .sig { width: 16px; height: 16px; } .close { width: 14px; height: 14px; }

.csplit { height: 6px; flex: none; display: flex; justify-content: center; }
.csplit i { width: 478px; height: 2px; margin: 1px 0 0 -4px; background: repeating-linear-gradient(90deg, #ccc 0 2px, transparent 2px 5px); }
.console { height: 156px; flex: none; }
.console .dockhead { margin-top: 0; }
.cbox { height: 90px; margin-top: 2px; border: 1px solid #828790; border-bottom-width: 2px; background: #fff; display: grid; grid-template: 70px 16px / 1422px 15px; }
.ctext { margin-left: 2px; border-left: 19px solid #f0f0f0; }
.ctext pre { margin: 1px 0 0 0; font: 13.330px/16px "Liberation Mono", monospace; }
.v2 { width: 15px; height: 9px; margin: 29px 0 2px; }
.h2 { width: 126px; height: 15px; margin-left: 4px; }
.ctabs { display: flex; height: 24px; }
.ct { height: 21px; display: flex; align-items: center; border: 1px solid #dcdcdc; border-top: 0; border-left: 0; gap: 10px; flex: none; }
.c1 { height: 23px; width: 86px; padding-left: 6px; background: #fff; } .c2 { width: 77px; padding-left: 4px; } .c3 { width: 90px; padding-left: 5px; } .c4 { width: 165px; padding-left: 5px; border-right: 0; }
.ct > svg { margin-top: -2px; }
.status { text-align: right; padding: 3px 5px 0 0; font-size: 12px; }

.monitor { position: absolute; left: 1268px; top: 738px; width: 152px; height: 72px; }
.pill { position: absolute; left: 46px; top: 17px; width: 104px; height: 41px; border-radius: 0 21px 21px 0; background: #f5f5f5; box-shadow: 0 0 3px rgba(0,0,0,.35); }
.net { position: absolute; left: 23px; top: 4px; width: 49px; display: flex; align-items: center; justify-content: space-between; font-size: 9.500px; line-height: 12px; }
.net svg { width: 10px; height: 10px; }
.cpu { position: absolute; left: 24px; top: 21px; font-size: 11px; color: #666; letter-spacing: -.1px; white-space: nowrap; }
.cpu em { font-style: normal; color: #20c85a; }
.plus { position: absolute; left: 78px; top: 7px; width: 22px; height: 22px; }
.ball { position: absolute; left: 1px; top: 0; width: 66px; height: 70px; }
.pct { font: 300 22px "Open Sans", "Noto Sans", sans-serif; fill: #444; letter-spacing: -1px; } .pcs { font: 13px "Noto Sans", sans-serif; fill: #444; }
.ime { position: absolute; left: 1262px; top: 834px; width: 153px; height: 26px; background: #fff; border: 1px solid #b5cfec; }
.ime > svg { width: 160px; height: 26px; margin: -1px 0 0 -1px; }
.imeying { position: absolute; left: 12px; top: 3px; color: #1673cf; font: bold 14px/18px "Noto Sans CJK SC", sans-serif; }
.sogou { position: absolute; left: -23px; top: -3px; width: 27px; height: 27px; border-radius: 4px; background: #f1501f; color: #fff; font: bold 29px/27px "Liberation Sans", sans-serif; text-align: center; transform: rotate(-12deg); }
.sogou.small { position: static; width: 14px; height: 14px; font-size: 15px; line-height: 14px; border-radius: 2px; margin-left: 15px; }

.taskbar { height: 40px; flex: none; background: linear-gradient(90deg, #20363f, #20333f 50%, #1b2845); display: flex; align-items: center; color: #fff; }
.start { width: 16px; height: 16px; margin-left: 16px; }
.folder { width: 22px; height: 20px; margin-left: 32px; }
.browser { width: 22px; height: 22px; margin-left: 27px; }
.task { width: 160px; height: 40px; margin-left: 14px; padding-left: 10px; background: #50646d; border-bottom: 2px solid #76b9ed; display: flex; align-items: center; gap: 4px; white-space: nowrap; letter-spacing: .22px; }
.task svg { width: 24px; height: 22px; }
.tray { margin-left: auto; display: flex; align-items: center; height: 40px; }
.chev { width: 12px; height: 12px; } .globe { width: 16px; height: 16px; margin-left: 34px; }
.ying { margin-left: 33px; width: 14px; font: 13px/20px "Noto Sans CJK SC", sans-serif; }
.clock { width: 80px; margin-left: 7px; display: flex; flex-direction: column; text-align: center; line-height: 19px; letter-spacing: .1px; }
.note { width: 18px; height: 18px; margin-left: 8px; }
.peek { width: 1px; height: 40px; background: #56647a; margin: 0 3px 0 19px; }
```
